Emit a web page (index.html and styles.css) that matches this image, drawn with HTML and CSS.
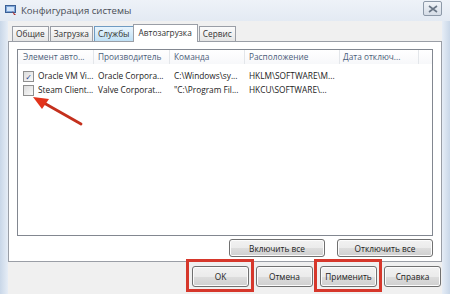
FILE: index.html
```html
<!DOCTYPE html>
<html lang="ru">
<head>
  <meta charset="UTF-8" />
  <title>Конфигурация системы</title>
  <link rel="stylesheet" href="styles.css">
</head>
<body>
  <div class="window">
    <div class="titlebar">
      <svg class="app-icon" width="12" height="11" viewBox="0 0 12 11">
        <rect x="0.5" y="0.5" width="10" height="7" fill="#7ea6d8" stroke="#3b5f95"/>
        <rect x="2" y="2" width="7" height="4" fill="#cfe3fa"/>
        <path d="M7 6 L11 10 L9 10 Z" fill="#b03030"/>
      </svg>
      <span class="title">Конфигурация системы</span>
      <span class="close">
        <svg width="10" height="8" viewBox="0 0 10 8">
          <path d="M1 1 L9 7 M9 1 L1 7" stroke="#6a7686" stroke-width="1.6"/>
        </svg>
      </span>
    </div>

    <div class="client">
      <div class="tabs">
        <span class="tab">Общие</span>
        <span class="tab">Загрузка</span>
        <span class="tab hover">Службы</span>
        <span class="tab active">Автозагрузка</span>
        <span class="tab">Сервис</span>
      </div>

      <div class="panel">
        <div class="listview">
          <div class="lv-head">
            <span class="c1">Элемент авто...</span>
            <span class="c2">Производитель</span>
            <span class="c3">Команда</span>
            <span class="c4">Расположение</span>
            <span class="c5">Дата отключ...</span>
            <span class="c6"></span>
          </div>
          <div class="lv-row">
            <span class="c1"><i class="cb">✓</i>Oracle VM Vi...</span>
            <span class="c2">Oracle Corpora...</span>
            <span class="c3">C:\Windows\sy...</span>
            <span class="c4">HKLM\SOFTWARE\M...</span>
          </div>
          <div class="lv-row">
            <span class="c1"><i class="cb"></i>Steam Client...</span>
            <span class="c2">Valve Corporat...</span>
            <span class="c3">"C:\Program Fil...</span>
            <span class="c4">HKCU\SOFTWARE\...</span>
          </div>
        </div>
        <div class="panel-buttons">
          <button class="btn wide">Включить все</button>
          <button class="btn wide">Отключить все</button>
        </div>
      </div>

      <div class="footer">
        <span class="mark"><button class="btn">OK</button></span>
        <button class="btn">Отмена</button>
        <span class="mark"><button class="btn">Применить</button></span>
        <button class="btn">Справка</button>
      </div>
    </div>

    <svg class="arrow" width="60" height="40" viewBox="0 0 60 40">
      <path d="M51 31 L14 10" stroke="#c4301d" stroke-width="2.8" stroke-linecap="round"/>
      <path d="M3 4 L19 6 L12 16 Z" fill="#e2331b"/>
    </svg>
  </div>
</body>
</html>
```

FILE: styles.css
```css
body {
  margin: 0;
  width: 450px;
  height: 294px;
  overflow: hidden;
  font-family: "Open Sans", "DejaVu Sans", sans-serif;
  font-size: 8.3px;
  color: #222;
}
.window {
  position: relative;
  width: 450px;
  height: 294px;
  background: linear-gradient(90deg, #c9d7e8 0, #e6edf6 8px, #e6edf6 442px, #c9d7e8 450px);
  display: flex;
  flex-direction: column;
}
.titlebar {
  height: 21px;
  display: flex;
  align-items: center;
  padding: 0 8px 0 5px;
  background: linear-gradient(#eef2f8, #e3eaf3);
}
.app-icon {
  margin-right: 4px;
}
.title {
  font-size: 9.6px;
  color: #4a4f57;
  flex: 1;
}
.close {
  width: 17px;
  height: 13px;
  border: 1px solid #8d99a8;
  border-radius: 2px;
  background: linear-gradient(#f1f4f8, #d6dde7);
  display: flex;
  align-items: center;
  justify-content: center;
  margin-top: -4px;
}
.client {
  flex: 1;
  margin: 0 8px 0 8px;
  background: #f0f0f0;
  display: flex;
  flex-direction: column;
  padding-top: 3px;
}
.tabs {
  display: flex;
  align-items: flex-end;
  height: 17px;
  padding-left: 4px;
  position: relative;
  z-index: 1;
}
.tab {
  height: 14px;
  line-height: 14px;
  padding: 0 3px;
  margin-right: 1px;
  border: 1px solid #9a9ea6;
  border-bottom: none;
  background: linear-gradient(#fbfbfb, #e5e5e5);
  color: #333;
}
.tab.hover {
  background: linear-gradient(#e9f5fd, #bfe0f5);
  border-color: #6f9bc2;
  margin-right: -1px;
}
.tab.active {
  height: 17px;
  line-height: 15px;
  background: #fff;
  padding: 0 5px;
  margin-bottom: -1px;
}
.panel {
  height: 221px;
  background: #fff;
  border: 1px solid #9a9ea6;
  display: flex;
  flex-direction: column;
  padding: 7px 8px 0 8px;
  box-sizing: border-box;
}
.listview {
  height: 187px;
  border: 1px solid #828790;
  box-sizing: border-box;
  background: #fff;
}
.lv-head,
.lv-row {
  display: flex;
  white-space: nowrap;
}
.lv-head {
  height: 15px;
  line-height: 14px;
  color: #4c607a;
  margin-bottom: 4px;
}
.lv-head span {
  border-right: 1px solid #e3e6ea;
  background: linear-gradient(#fff, #f7f8fa);
  height: 14px;
  box-sizing: border-box;
}
.lv-head .c6 {
  flex: 1;
  border-right: none;
}
.lv-row {
  height: 14px;
  line-height: 14px;
  color: #222;
}
.c1 { width: 76px; padding-left: 5px; box-sizing: border-box; display: flex; align-items: center; }
.c2 { width: 76px; padding-left: 4px; box-sizing: border-box; }
.c3 { width: 75px; padding-left: 4px; box-sizing: border-box; }
.c4 { width: 95px; padding-left: 4px; box-sizing: border-box; }
.c5 { width: 79px; padding-left: 3px; box-sizing: border-box; }
.cb {
  width: 9px;
  height: 9px;
  border: 1px solid #8f8f8f;
  background: linear-gradient(135deg, #dcdcdc, #fafafa);
  margin-right: 4px;
  font-style: normal;
  font-size: 8px;
  line-height: 9px;
  text-align: center;
  color: #2a3f8a;
  font-weight: bold;
}
.panel-buttons {
  display: flex;
  justify-content: flex-end;
  gap: 12px;
  margin-top: 3px;
}
button {
  font-family: "Open Sans", "DejaVu Sans", sans-serif;
}
.btn {
  height: 18px;
  padding: 0;
  font-size: 8.3px;
  color: #222;
  border: 1px solid #707070;
  border-radius: 3px;
  background: linear-gradient(#f2f2f2 0, #ebebeb 50%, #dddddd 51%, #cfcfcf 100%);
  box-shadow: inset 0 0 0 1px #fcfcfc;
}
.btn.wide {
  width: 96px;
}
.footer {
  flex: 1;
  display: flex;
  justify-content: flex-end;
  align-items: flex-start;
  gap: 7px;
  padding: 4px 1px 0 0;
}
.footer .btn {
  width: 57px;
  height: 21px;
  display: block;
}
.mark {
  position: relative;
}
.mark::after {
  content: "";
  position: absolute;
  inset: -7px -5px -5px -6px;
  border: 3px solid #d6372b;
}
.arrow {
  position: absolute;
  left: 30px;
  top: 93px;
}
```
